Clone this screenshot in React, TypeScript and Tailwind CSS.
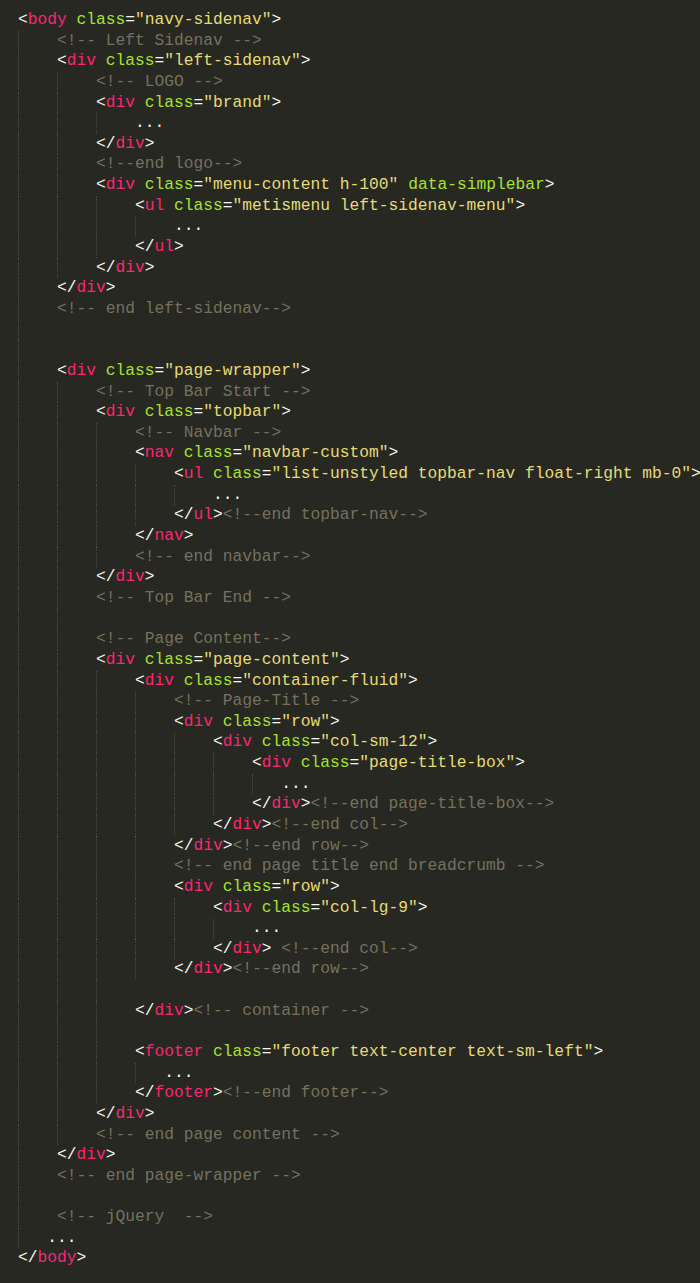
import React from "react";

// [indent, text]; blank lines carry the number of guides to draw
type Line = [number, string];

const lines: Line[] = [
  [0, '<body class="navy-sidenav">'],
  [4, "<!-- Left Sidenav -->"],
  [4, '<div class="left-sidenav">'],
  [8, "<!-- LOGO -->"],
  [8, '<div class="brand">'],
  [12, "..."],
  [8, "</div>"],
  [8, "<!--end logo-->"],
  [8, '<div class="menu-content h-100" data-simplebar>'],
  [12, '<ul class="metismenu left-sidenav-menu">'],
  [16, "..."],
  [12, "</ul>"],
  [8, "</div>"],
  [4, "</div>"],
  [4, "<!-- end left-sidenav-->"],
  [4, ""],
  [4, ""],
  [4, '<div class="page-wrapper">'],
  [8, "<!-- Top Bar Start -->"],
  [8, '<div class="topbar">'],
  [12, "<!-- Navbar -->"],
  [12, '<nav class="navbar-custom">'],
  [16, '<ul class="list-unstyled topbar-nav float-right mb-0">'],
  [20, "..."],
  [16, "</ul><!--end topbar-nav-->"],
  [12, "</nav>"],
  [12, "<!-- end navbar-->"],
  [8, "</div>"],
  [8, "<!-- Top Bar End -->"],
  [8, ""],
  [8, "<!-- Page Content-->"],
  [8, '<div class="page-content">'],
  [12, '<div class="container-fluid">'],
  [16, "<!-- Page-Title -->"],
  [16, '<div class="row">'],
  [20, '<div class="col-sm-12">'],
  [24, '<div class="page-title-box">'],
  [27, "..."],
  [24, "</div><!--end page-title-box-->"],
  [20, "</div><!--end col-->"],
  [16, "</div><!--end row-->"],
  [16, "<!-- end page title end breadcrumb -->"],
  [16, '<div class="row">'],
  [20, '<div class="col-lg-9">'],
  [24, "..."],
  [20, "</div> <!--end col-->"],
  [16, "</div><!--end row-->"],
  [12, ""],
  [12, "</div><!-- container -->"],
  [12, ""],
  [12, '<footer class="footer text-center text-sm-left">'],
  [15, "..."],
  [12, "</footer><!--end footer-->"],
  [8, "</div>"],
  [8, "<!-- end page content -->"],
  [4, "</div>"],
  [4, "<!-- end page-wrapper -->"],
  [4, ""],
  [4, "<!-- jQuery  -->"],
  [3, "..."],
  [0, "</body>"],
];

const tokenRe = /(<!--[\s\S]*?-->)|(<\/?)([a-z]+)|("[^"]*")|([a-z][\w-]*)|(\s+)|([^\s])/gi;

function highlight(text: string) {
  const out: React.ReactNode[] = [];
  let m: RegExpExecArray | null;
  let k = 0;
  tokenRe.lastIndex = 0;
  while ((m = tokenRe.exec(text))) {
    if (m[1]) out.push(<span key={k++} className="text-[#75715e]">{m[1]}</span>);
    else if (m[2]) {
      out.push(<span key={k++} className="text-[#f8f8f2]">{m[2]}</span>);
      out.push(<span key={k++} className="text-[#f92672]">{m[3]}</span>);
    } else if (m[4]) out.push(<span key={k++} className="text-[#e6db74]">{m[4]}</span>);
    else if (m[5]) out.push(<span key={k++} className="text-[#a6e22e]">{m[5]}</span>);
    else if (m[6]) out.push(<span key={k++}>{m[6]}</span>);
    else out.push(<span key={k++} className="text-[#f8f8f2]">{m[7]}</span>);
  }
  return out;
}

function CodeLine({ indent, text }: { indent: number; text: string }) {
  // split the leading whitespace into tab stops, each one with a dotted guide
  const chunks: number[] = [];
  for (let c = 0; c < indent; c += 4) chunks.push(Math.min(4, indent - c));
  return (
    <div className="flex h-[20.65px] leading-[20.65px] whitespace-pre">
      {chunks.map((w, i) => (
        <span
          key={i}
          className={`shrink-0 border-l border-dotted border-[#4b4c45] ${w === 4 ? "w-[4ch]" : "w-[3ch]"}`}
        />
      ))}
      <span>{highlight(text)}</span>
    </div>
  );
}

export default function App() {
  return (
    <div className="w-[700px] h-[1283px] overflow-hidden bg-[#272822] pt-[10px] pl-[18px] font-['Liberation_Mono',monospace] text-[16.25px] text-[#f8f8f2]">
      {lines.map(([indent, text], i) => (
        <CodeLine key={i} indent={indent} text={text} />
      ))}
    </div>
  );
}
